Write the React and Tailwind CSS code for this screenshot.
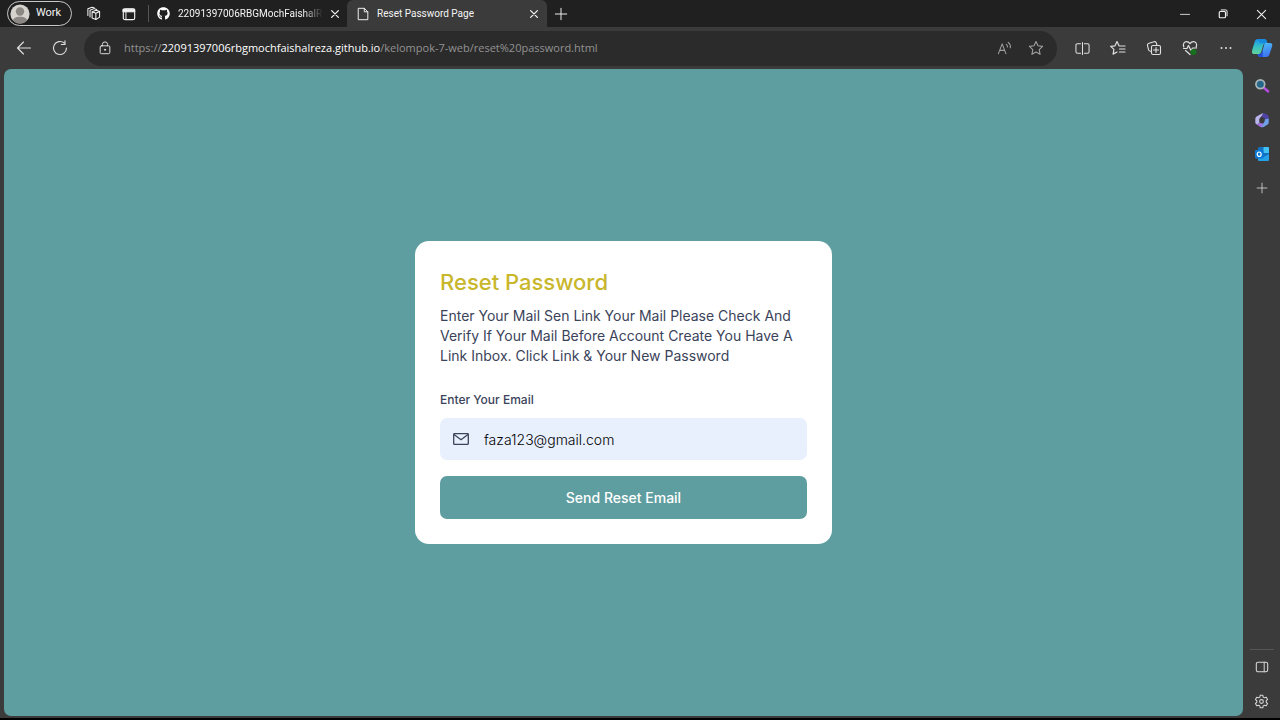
import React, { useState } from "react";
import { FaGithub } from "react-icons/fa";

const ui = "font-['Open_Sans','Noto_Sans',sans-serif]";

function Icon({ size = 16, children, ...rest }) {
  return (
    <svg
      width={size}
      height={size}
      viewBox="0 0 16 16"
      fill="none"
      stroke="currentColor"
      strokeWidth="1.100"
      strokeLinecap="round"
      strokeLinejoin="round"
      aria-hidden="true"
      className="shrink-0"
      {...rest}
    >
      {children}
    </svg>
  );
}

function IconButton({ label, className = "w-9", children }) {
  return (
    <button type="button" aria-label={label} className={`flex h-7 shrink-0 items-center justify-center ${className}`}>
      {children}
    </button>
  );
}

const CloseIcon = () => (
  <Icon size={12}>
    <path d="M3.500 3.500l9 9M12.500 3.500l-9 9" strokeWidth="1.700" />
  </Icon>
);

const PlusIcon = ({ size }) => (
  <Icon size={size}>
    <path d="M8 1.500v13M1.500 8h13" />
  </Icon>
);

function TabBar() {
  return (
    <header className="flex h-[27px] items-stretch bg-[#202020] font-['Roboto',sans-serif] text-[10px] text-[#f4f4f4]">
      <div className="flex items-center pl-[7px]">
        <button type="button" className="flex h-[25px] w-[65px] items-center gap-[6px] rounded-full border border-[#c8c8c8] pl-[2px]">
          <svg width="20" height="20" viewBox="0 0 20 20" aria-hidden="true" className="shrink-0">
            <defs>
              <clipPath id="face">
                <circle cx="10" cy="10" r="9.600" />
              </clipPath>
            </defs>
            <circle cx="10" cy="10" r="9.600" fill="#d6d2ce" />
            <g clipPath="url(#face)" fill="#8b8783">
              <circle cx="10" cy="7.500" r="4.200" />
              <path d="M2.500 18.500c0-4 3-5.700 7.500-5.700s7.500 1.700 7.500 5.700l-2 2h-11z" />
            </g>
          </svg>
          <span className="text-[11px]">Work</span>
        </button>
        <IconButton label="Workspaces" className="ml-1 w-[35px]">
          <Icon size={15}>
            <path d="M6.500 6.200L10.800 4.500l3.700 1.300v6l-4 2.700-4-1.700zM6.500 6.200l4 1.500 4-1.900M10.500 7.700v6.800" />
            <path d="M4.300 11.700V4.500l4.200-1.700 3 .9M2 10V3l4.500-1.600 2.500.7" />
          </Icon>
        </IconButton>
        <IconButton label="Tab actions" className="w-[35px]">
          <Icon size={14}>
            <rect x="1.500" y="2" width="13" height="12.500" rx="2" strokeWidth="1.300" />
            <path d="M1.500 2.500h13v3h-13z" fill="currentColor" />
            <path d="M4.500 5v9" />
          </Icon>
        </IconButton>
        <span className="ml-[2px] h-[17px] w-px bg-[#555555]" />
      </div>

      <div className="flex w-[198px] items-center pl-2">
        <FaGithub size={13} color="#ffffff" aria-hidden="true" className="shrink-0" />
        <span className="ml-2 min-w-0 flex-1 whitespace-nowrap [mask-image:linear-gradient(to_right,black_86%,transparent)]">
          22091397006RBGMochFaishalRe
        </span>
        <IconButton label="Close tab" className="w-6">
          <CloseIcon />
        </IconButton>
      </div>

      <div className="flex w-[200px] items-center rounded-t-md bg-[#3b3b3b] pl-[9px] pr-px">
        <Icon size={14}>
          <path d="M3 1.500h6.500l4 4v9h-10.500zM9.500 1.500v4h4" />
        </Icon>
        <span className="ml-[7px] min-w-0 flex-1 truncate">Reset Password Page</span>
        <IconButton label="Close tab" className="w-6">
          <CloseIcon />
        </IconButton>
      </div>
      <IconButton label="New tab" className="w-7">
        <PlusIcon size={14} />
      </IconButton>

      <div className="ml-auto flex">
        <IconButton label="Minimize" className="w-[38px]">
          <Icon size={12}>
            <path d="M2 8.500h12" />
          </Icon>
        </IconButton>
        <IconButton label="Restore" className="w-[38px]">
          <Icon size={10}>
            <rect x="2" y="4" width="10" height="10" rx="1.500" strokeWidth="1.800" />
            <path d="M5 1.500h7.500a2 2 0 012 2V11" strokeWidth="1.600" />
          </Icon>
        </IconButton>
        <IconButton label="Close" className="w-[38px]">
          <Icon size={11}>
            <path d="M2 2l12 12M14 2L2 14" strokeWidth="1.500" />
          </Icon>
        </IconButton>
      </div>
    </header>
  );
}

function CopilotIcon() {
  return (
    <svg width="22" height="20" viewBox="0 0 22 20" aria-hidden="true">
      <defs>
        <linearGradient id="cpa" x1="0" y1="0" x2="0" y2="1">
          <stop offset="0" stopColor="#1b8fe8" />
          <stop offset="0.500" stopColor="#35c0c8" />
          <stop offset="1" stopColor="#63d39a" />
        </linearGradient>
        <linearGradient id="cpb" x1="0" y1="0" x2="0.300" y2="1">
          <stop offset="0" stopColor="#4cc3f5" />
          <stop offset="1" stopColor="#3f78f0" />
        </linearGradient>
      </defs>
      <path d="M7 1h6c1.700 0 2.500 1 3 3l.5 1.500h-2c-1.500 0-2 1-2.500 2.500l-1.700 5.500C9.700 15.500 8.800 16 7 16H3C1 16 .6 14.500 1.200 12L3.600 4C4.200 2 5 1 7 1z" fill="url(#cpa)" />
      <path d="M7 1h6c1.700 0 2.500 1 3 3l.5 1.500h-3.500L9 5z" fill="#168be0" />
      <path d="M15 5h4c2.200 0 2.700 1.500 2 3.800L18.600 16c-.6 2-1.500 3-3.600 3H9.500c-1.800 0-2.500-1-3-3h2c1.500 0 2.200-.8 2.700-2.500L13 7.500C13.400 6 13.800 5 15 5z" fill="url(#cpb)" />
      <path d="M6.500 16h2c1.500 0 2.200-.8 2.700-2.500l.6-1.500V19H9.500c-1.800 0-2.500-1-3-3z" fill="#2450d6" />
    </svg>
  );
}

function Toolbar() {
  return (
    <nav aria-label="Browser" className="flex h-[42px] items-center text-[#e0e0e0]">
      <IconButton label="Back" className="ml-[6px] w-9">
        <Icon>
          <path d="M14.500 8h-13M7.500 2L1.500 8l6 6" />
        </Icon>
      </IconButton>
      <IconButton label="Refresh">
        <Icon>
          <path d="M14.500 8A6.500 6.500 0 1112.200 3M13 .8v3.700H9.300" />
        </Icon>
      </IconButton>
      <div className="ml-[6px] mr-[7px] flex h-[35px] min-w-0 flex-1 items-center rounded-full bg-[#2b2b2b] pl-[14px] pr-[5px]">
        <Icon size={14}>
          <rect x="2.500" y="5.500" width="11" height="9" rx="1.300" />
          <path d="M5 5.500V4a3 3 0 016 0v1.500" />
          <circle cx="8" cy="10" r="0.700" fill="currentColor" />
        </Icon>
        <div className={`${ui} ml-3 min-w-0 flex-1 truncate text-[11px] text-[#929292]`}>
          https://<span className="text-white">22091397006rbgmochfaishalreza.github.io</span>
          /kelompok-7-web/reset%20password.html
        </div>
        <IconButton label="Read aloud" className="w-8 text-[#a0a0a0]">
          <Icon size={15}>
            <path d="M1.500 13.500L5.500 3l4 10.500M3 10h5M10 3.500c1 .8 1.300 1.800 1.100 3M12 1.500c2 1.500 2.700 3.500 2.200 5.800" />
          </Icon>
        </IconButton>
        <IconButton label="Add to favorites" className="w-8 text-[#a0a0a0]">
          <Icon>
            <path d="M8 1.500l2 4.300 4.600.6-3.400 3.200.9 4.700L8 12l-4.100 2.300.9-4.700L1.400 6.400 6 5.800z" />
          </Icon>
        </IconButton>
      </div>
      <IconButton label="Split screen">
        <Icon size={15}>
          <path d="M6 3H2.500A1.500 1.500 0 001 4.500v7A1.500 1.500 0 002.500 13H6M10 3h3.500A1.500 1.500 0 0115 4.500v7a1.500 1.500 0 01-1.500 1.500H10M8 1.500v13" />
        </Icon>
      </IconButton>
      <IconButton label="Favorites">
        <Icon>
          <path d="M9.500 6L9 5.800 7 1.500 5 5.800l-4.300.6 3.200 3-.8 4.700L7 12M9.500 6h5.500M9.500 9h5.500M9.500 12h5.500" strokeWidth="1.200" />
        </Icon>
      </IconButton>
      <IconButton label="Collections">
        <Icon>
          <rect x="5.500" y="5.500" width="9" height="9" rx="1.500" />
          <path d="M10 7.500v5M7.500 10h5M5.500 11.500L3.800 11a2 2 0 01-1.300-1.500L1.500 5.600A2 2 0 013 3.200l5-1.500a2 2 0 012.400 1.400l.6 2.400" />
        </Icon>
      </IconButton>
      <IconButton label="Browser essentials">
        <Icon>
          <path d="M1.800 7C.5 3.500 2.500 1.700 4.500 1.700c1.600 0 2.700.8 3.500 2 .8-1.200 1.900-2 3.500-2 2 0 4 1.800 2.700 5.300M1.500 8.500H5l1.500-3 2.500 5 1.500-2.500h4M3.500 10.500L8 14.500" strokeWidth="1.200" />
          <circle cx="11.500" cy="12" r="3" fill="#16701c" stroke="none" />
        </Icon>
      </IconButton>
      <IconButton label="Settings and more">
        <Icon fill="currentColor" stroke="none">
          <circle cx="3.500" cy="8" r="1" />
          <circle cx="8" cy="8" r="1" />
          <circle cx="12.500" cy="8" r="1" />
        </Icon>
      </IconButton>
      <IconButton label="Copilot">
        <CopilotIcon />
      </IconButton>
    </nav>
  );
}

function Sidebar() {
  return (
    <aside aria-label="Sidebar" className="flex w-[37px] shrink-0 flex-col items-center pb-[3px] pt-[3px] text-[#d8d8d8]">
      <div className="flex flex-col gap-[6px]">
        <IconButton label="Search">
          <svg width="16" height="16" viewBox="0 0 16 16" aria-hidden="true">
            <path d="M9.800 9.800l4.200 3.500" stroke="#b44be0" strokeWidth="2.600" strokeLinecap="round" />
            <circle cx="6.300" cy="6.300" r="4.400" fill="#27688a" stroke="#a9b4b8" strokeWidth="1.700" />
          </svg>
        </IconButton>
        <IconButton label="Microsoft 365">
          <svg width="16" height="16" viewBox="0 0 16 16" aria-hidden="true">
            <path d="M9 1L3 4.200C1.800 5 1.300 5.700 1.300 7v3.500c0 1.500 1.700 2.200 3 1.300l1.200-.8V7.500C5.500 5 8.500 4.500 9 1z" fill="#b9b4ec" />
            <path d="M9 1c.8-.2 1.200 0 2 .4l2.700 1.700c.8.500 1 1 1 1.900v5L10.500 7.500V6L7 5c1.300-1 2-2 2-4z" fill="#5143a6" />
            <path d="M14.700 6.500v4.300c0 .8-.4 1.400-1 1.800l-4 2.300c-1 .5-2 .5-3 0L5 13.800c3.500-1 5.500-2.300 5.500-6.300z" fill="#6f9fe6" />
            <path d="M1.800 11.500c.8.800 1.800.8 2.700.2l1-.7 4 .5c-1 1.200-1.500 2.500-1.500 3.800-.5 0-1-.2-1.500-.5L2.500 12.500z" fill="#a371e4" />
            <path d="M5.500 7L8 5.300 10.500 7v2.500L8 11l-2.500-1z" fill="#3b3b3b" />
          </svg>
        </IconButton>
        <IconButton label="Outlook">
          <svg width="16" height="16" viewBox="0 0 16 16" aria-hidden="true">
            <rect x="4" y="1" width="11" height="12" rx="1" fill="#1470be" />
            <path d="M9.500 1H14a1 1 0 011 1v5H9.500z" fill="#43c2f5" />
            <path d="M4 8l5.500 3L15 8v6a1 1 0 01-1 1H5a1 1 0 01-1-1z" fill="#24a0e6" />
            <rect x="1" y="4" width="8.500" height="8.500" rx="1" fill="#0878d4" />
            <ellipse cx="5.200" cy="8.200" rx="2" ry="2.200" fill="none" stroke="#ffffff" strokeWidth="1.200" />
          </svg>
        </IconButton>
        <IconButton label="Customize sidebar">
          <PlusIcon size={12} />
        </IconButton>
      </div>
      <div className="mt-auto flex flex-col items-center gap-[6px] border-t border-[#555555] pt-[3px]">
        <IconButton label="Toggle sidebar" className="w-6">
          <Icon size={14}>
            <rect x="1.500" y="2.500" width="13" height="11" rx="2" strokeWidth="1.200" />
            <path d="M10.500 2.500v11" />
          </Icon>
        </IconButton>
        <IconButton label="Settings" className="w-6">
          <Icon size={15}>
            <path d="M6.600 1.300h2.800l.4 2 1.300.8 2-.7 1.400 2.400-1.500 1.400v1.600l1.500 1.400-1.400 2.400-2-.7-1.300.8-.4 2H6.600l-.4-2-1.300-.8-2 .7-1.400-2.400L3 8.800V7.200L1.500 5.800l1.400-2.400 2 .7 1.300-.8z" />
            <circle cx="8" cy="8" r="2" />
          </Icon>
        </IconButton>
      </div>
    </aside>
  );
}

function ResetForm() {
  const [email, setEmail] = useState("faza123@gmail.com");
  return (
    <form
      onSubmit={(e) => e.preventDefault()}
      className="w-full max-w-[417px] rounded-[14px] bg-white p-[25px] font-['Inter',sans-serif] text-[#3b435a]"
    >
      <h1 className="text-[22px] font-medium leading-8 text-[#c8b62b]">Reset Password</h1>
      <p className="mt-2 text-[14px] leading-5">
        Enter Your Mail Sen Link Your Mail Please Check And Verify If Your Mail Before Account Create You Have A Link
        Inbox. Click Link &amp; Your New Password
      </p>
      <label htmlFor="email" className="mt-6 block text-[12px] font-medium leading-5">
        Enter Your Email
      </label>
      <div className="mt-2 flex h-[42px] items-center gap-[15px] rounded-[7px] bg-[#e8f0fe] pl-[13px]">
        <svg width="16" height="12" viewBox="0 0 16 12" fill="none" stroke="currentColor" strokeWidth="1.300" aria-hidden="true" className="shrink-0">
          <rect x="0.700" y="0.700" width="14.600" height="10.600" rx="0.500" />
          <path d="M1 1.500l7 5.200 7-5.200" />
        </svg>
        <input
          id="email"
          type="email"
          value={email}
          onChange={(e) => setEmail(e.target.value)}
          className="h-10 min-w-0 flex-1 bg-transparent text-[14px] font-light text-black outline-none"
        />
      </div>
      <button type="submit" className="mt-4 h-[43px] w-full rounded-[7px] bg-[#5f9ea0] text-[14px] font-medium text-white">
        Send Reset Email
      </button>
    </form>
  );
}

export default function App() {
  return (
    <div className={`${ui} flex min-h-screen flex-col border-b-2 border-black bg-[#3b3b3b]`}>
      <TabBar />
      <Toolbar />
      <div className="flex flex-1">
        <main className="mb-[2px] ml-1 flex flex-1 items-center justify-center rounded-[7px] bg-[#5f9ea0]">
          <ResetForm />
        </main>
        <Sidebar />
      </div>
    </div>
  );
}
